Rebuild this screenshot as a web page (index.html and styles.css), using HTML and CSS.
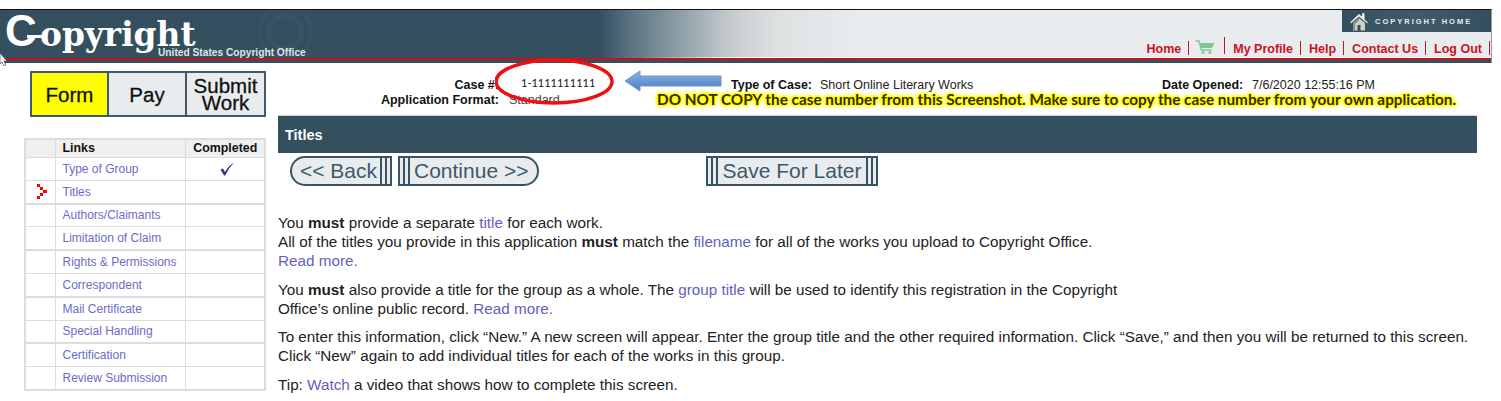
FILE: index.html
```html
<!DOCTYPE html>
<html lang="en">
<head>
<meta charset="utf-8">
<title>Copyright Titles</title>
<link rel="stylesheet" href="styles.css">
</head>
<body>
<div class="page">
  <header class="masthead">
    <div class="mast-main">
      <div class="logo">
        <div class="logo-word"><span class="logo-c">C</span><span class="logo-rest">opyright</span></div>
        <div class="logo-sub">United States Copyright Office</div>
      </div>
      <div class="mast-right">
        <div class="home-tab">
          <svg class="home-icon" width="18" height="19" viewBox="0 0 18 19"><path d="M0 10.500 9 2l3 2.800V1.500h1l.5-1 .5 1h.5v6L18 10.500l-1 .8L9 4.500 1 11.300z" fill="#f4f4f0"/><path d="M3 11l6-5 6 5v7.500h-4.500V13h-3v5.500H3z" fill="#cfcfc6"/><path d="M3 11l6-5v2.500L5 12v6.500H3z" fill="#8e8e84"/></svg>
          <span class="home-label">COPYRIGHT HOME</span>
        </div>
        <nav class="top-nav">
          <a>Home</a>
          <a class="cart"><svg width="20" height="14" viewBox="0 0 20 14"><path d="M.5 1h3.500l2.500 9h10" fill="none" stroke="#7fc795" stroke-width="1.500"/><path d="M4 3h15.500l-2.500 5H6z" fill="#7fc795"/><circle cx="8" cy="12.500" r="1.500" fill="#7fc795"/><circle cx="15" cy="12.500" r="1.500" fill="#7fc795"/></svg></a>
          <a>My Profile</a>
          <a>Help</a>
          <a>Contact Us</a>
          <a>Log Out</a>
        </nav>
      </div>
    </div>
  </header>

  <div class="main">
    <aside class="sidebar">
      <div class="steps">
        <div class="step step-on">Form</div>
        <div class="step">Pay</div>
        <div class="step step-two">Submit<br>Work</div>
      </div>
      <table class="links">
        <thead><tr><th></th><th class="col-link">Links</th><th class="col-done">Completed</th></tr></thead>
        <tbody>
          <tr><td></td><td class="col-link"><a>Type of Group</a></td><td class="done"><svg width="16" height="14" viewBox="0 0 16 14"><path d="M1.500 7.500 4 6.500l2 3.500C8 6 11 3 15 .8 11.500 4.500 8.500 8.500 6.300 13.500H5z" fill="#35358a"/></svg></td></tr>
          <tr><td class="cur"><svg width="12" height="18" viewBox="0 0 12 18"><g fill="#f00"><rect x="1" y="1" width="3" height="3"/><rect x="4" y="4" width="3" height="3"/><rect x="7" y="7" width="4" height="3"/><rect x="4" y="10" width="3" height="3"/><rect x="1" y="13" width="3" height="3"/></g></svg></td><td class="col-link"><a>Titles</a></td><td></td></tr>
          <tr><td></td><td class="col-link"><a>Authors/Claimants</a></td><td></td></tr>
          <tr><td></td><td class="col-link"><a>Limitation of Claim</a></td><td></td></tr>
          <tr><td></td><td class="col-link"><a>Rights &amp; Permissions</a></td><td></td></tr>
          <tr><td></td><td class="col-link"><a>Correspondent</a></td><td></td></tr>
          <tr><td></td><td class="col-link"><a>Mail Certificate</a></td><td></td></tr>
          <tr><td></td><td class="col-link"><a>Special Handling</a></td><td></td></tr>
          <tr><td></td><td class="col-link"><a>Certification</a></td><td></td></tr>
          <tr><td></td><td class="col-link"><a>Review Submission</a></td><td></td></tr>
        </tbody>
      </table>
    </aside>

    <section class="content">
      <div class="case-info">
        <div class="case-row">
          <b class="c-label">Case #:</b>
          <span class="c-num">1-1111111111</span>
          <b class="c-type">Type of Case:</b>
          <span class="c-typeval">Short Online Literary Works</span>
          <b class="c-date">Date Opened:</b>
          <span>7/6/2020 12:55:16 PM</span>
        </div>
        <div class="case-row">
          <b class="c-label">Application Format:</b>
          <span class="c-format">Standard</span>
          <span class="warning">DO NOT COPY the case number from this Screenshot. Make sure to copy the case number from your own application.</span>
        </div>
      </div>
      <h1 class="title-bar">Titles</h1>
      <div class="buttons">
        <span class="btn btn-back">&lt;&lt; Back</span>
        <span class="btn btn-cont">Continue &gt;&gt;</span>
        <span class="btn btn-save">Save For Later</span>
      </div>
      <div class="copy">
        <p>You <b>must</b> provide a separate <a>title</a> for each work.<br>
        All of the titles you provide in this application <b>must</b> match the <a>filename</a> for all of the works you upload to Copyright Office.<br>
        <a>Read more.</a></p>
        <p>You <b>must</b> also provide a title for the group as a whole. The <a>group title</a> will be used to identify this registration in the Copyright<br>
        Office’s online public record. <a>Read more.</a></p>
        <p>To enter this information, click “New.” A new screen will appear. Enter the group title and the other required information. Click “Save,” and then you will be returned to this screen.<br>
        Click “New” again to add individual titles for each of the works in this group.</p>
        <p>Tip: <a>Watch</a> a video that shows how to complete this screen.</p>
      </div>
    </section>
  </div>

  <svg class="annot" width="260" height="50" viewBox="0 0 260 50">
    <defs><linearGradient id="ag" x1="0" y1="0" x2="0" y2="1"><stop offset="0" stop-color="#8db3e6"/><stop offset="1" stop-color="#4a7cc4"/></linearGradient></defs>
    <ellipse cx="59" cy="23.500" rx="58" ry="21.500" fill="none" stroke="#ee0f0f" stroke-width="3.500"/>
    <path d="M130 23l15-10v5h81v10h-81v5z" fill="url(#ag)" stroke="#6d94c9"/>
  </svg>
  <svg class="cursor" width="8" height="14" viewBox="0 0 8 14"><path d="M0 1 7 9H4l2 4-2 1-2-4-2 2z" fill="#fff" stroke="#333" stroke-width=".6"/></svg>
</div>
</body>
</html>
```
FILE: styles.css
```css
html, body { margin: 0; padding: 0; background: #fff; }
body { font-family: "Liberation Sans", Arial, sans-serif; color: #222; overflow: hidden; }
.page { width: 1501px; height: 401px; position: relative; overflow: hidden; padding-top: 9px; box-sizing: border-box; }

.masthead { width: 1492px; height: 54px; box-sizing: border-box; border-top: 1px solid #111; border-right: 1px solid #999; background: #34505f; padding-bottom: 3px; }
.mast-main { height: 50px; box-sizing: border-box; border-bottom: 2px solid #c4121f; display: flex; justify-content: space-between;
  background-color: #34505f;
  background-image:
    linear-gradient(90deg, transparent 640px, #fff 760px),
    radial-gradient(circle at 285px 22px, transparent 0 14px, rgba(255,255,255,.025) 15px 18px, transparent 19px 24px, rgba(255,255,255,.02) 25px 27px, transparent 28px),
    linear-gradient(90deg, #34505f 0, #34505f 600px, #5a7380 630px, #95a5ad 687px, #c5cbce 730px, #dfe2e3 780px, #e8ecee 860px);
  background-size: 100% 1px, 100% 100%, 100% 100%;
  background-position: 0 100%, 0 0, 0 0;
  background-repeat: no-repeat;
}

.logo { width: 320px; padding-left: 5px; color: #fff; box-sizing: border-box; }
.logo-word { display: flex; align-items: baseline; font-weight: bold; height: 37px; line-height: 42px; position: relative; }
.logo-c { font-family: "Liberation Sans", sans-serif; font-size: 44px; width: 35px; }
.logo-c::after { content: ""; position: absolute; left: 22px; top: 25px; width: 16px; height: 3px; background: #fff; }
.logo-rest { font-family: "DejaVu Serif", serif; font-size: 32.800px; letter-spacing: 0; line-height: 36px; }
.logo-sub { font-size: 10.200px; font-weight: bold; margin: 0 0 0 153px; color: #dfe5e8; line-height: 11px; white-space: nowrap; }

.mast-right { display: flex; flex-direction: column; align-items: flex-end; }
.home-tab { width: 149px; height: 22px; flex: none; box-sizing: border-box; background: linear-gradient(90deg, #34505f, #3f5a69 50%, #34505f); display: flex; align-items: center; padding-left: 8px; gap: 7px; }
.home-label { font-size: 7.500px; font-weight: bold; letter-spacing: 2px; color: #e8ecee; white-space: nowrap; }
.top-nav { display: flex; align-items: flex-end; height: 26px; flex: none; padding: 0 1px 3px 0; box-sizing: border-box; }
.top-nav a { font-size: 12.500px; font-weight: bold; color: #cc1122; padding: 0 7px 0 8px; border-right: 1.500px solid #c4121f; line-height: 16px; height: 14px; }
.top-nav .cart { height: 17px; display: flex; align-items: flex-end; padding: 0 9px 0 6px; margin-bottom: 1px; }

.main { display: grid; grid-template-columns: 278px 1199px; }

.steps { margin: 8px 0 0 30px; width: 236px; height: 46px; box-sizing: border-box; background: #3f5a6a; padding: 2px; display: grid; grid-template-columns: 75px 76px 1fr; gap: 2px; }
.step { background: #e8ecee; color: #111; font-size: 20.500px; -webkit-text-stroke: .3px #111; padding-top: 1px; display: flex; align-items: center; justify-content: center; text-align: center; }
.step-on { background: #ff0; }
.step-two { line-height: 17px; padding-top: 0; }

.links { margin: 21px 0 0 24px; width: 242px; border-collapse: collapse; table-layout: fixed; border: 2px solid #dcdcdc; font-size: 12px; }
.links th, .links td { border: 1px solid #dcdcdc; padding: 0; height: 23.300px; box-sizing: border-box; }
.links th:nth-child(1), .links td:nth-child(1) { width: 30px; }
.links th:nth-child(3), .links td:nth-child(3) { width: 80px; }
.links th { background: #efefef; height: 18px; color: #111; font-size: 12.400px; }
.links .col-done { padding-left: 1px; }
.links tbody tr:nth-child(even) td { border-bottom-width: 2px; }
.links .col-link { text-align: left; padding-left: 7px; white-space: nowrap; }
.links a { color: #6b6bc9; }
.links .done { text-align: center; padding-left: 4px; }
.done svg, .cur svg { display: block; margin: 0 auto; }
.cur svg { margin-left: 10px; }

.case-info { height: 52px; padding-top: 15px; box-sizing: border-box; font-size: 12.500px; }
.case-row { display: flex; height: 15px; line-height: 15px; white-space: nowrap; }
.c-label { width: 221px; text-align: right; flex: none; color: #111; }
.c-num { margin: -3px 0 0 22px; width: 210px; font-family: Lato, sans-serif; font-size: 11px; color: #111; flex: none; }
.c-type { width: 89px; flex: none; color: #111; }
.c-typeval { width: 342px; flex: none; }
.c-date { width: 90px; flex: none; color: #111; }
.c-format { margin-left: 10px; width: 148px; flex: none; color: #444; }
.warning { font-family: Lato, sans-serif; font-weight: bold; font-size: 15.300px; color: #3a2a00; margin-top: -1px; text-shadow: 0 0 1px #ff0, 0 0 2px #ff0, 0 0 2px #ff0, 0 0 3px #ff0, 0 0 3px #ff0, 0 0 3px #ff0, 0 0 4px #ff0, 0 0 4px #ff0, 0 0 4px #ff0; }

.title-bar { margin: 0; height: 38px; line-height: 38px; background: #34505f; border-top: 1px solid #cfd6da; box-sizing: border-box; color: #fff; font-size: 14.500px; font-weight: bold; padding-left: 7px; }

.buttons { display: flex; margin: 3px 0 0 12px; height: 30px; }
.btn { display: flex; align-items: center; box-sizing: border-box; height: 30px; background: #e8ecee; border: 2px solid #3a5363; color: #3f5868; font-size: 21px; white-space: nowrap; }
.btn::before, .btn::after { align-self: stretch; box-sizing: border-box; width: 7px; border-left: 2px solid #3a5363; border-right: 2px solid #3a5363; flex: none; }
.btn-back { width: 102px; border-radius: 15px 0 0 15px; padding-left: 8px; justify-content: space-between; padding-right: 3px; }
.btn-back::after { content: ""; }
.btn-cont { width: 141px; margin-left: 6px; border-radius: 0 15px 15px 0; padding-left: 3px; gap: 4px; }
.btn-cont::before { content: ""; }
.btn-save { width: 172px; margin-left: 167px; padding: 0 3px; justify-content: space-between; }
.btn-save::before, .btn-save::after { content: ""; }

.copy { margin-top: 27px; font-size: 15.250px; line-height: 19px; color: #222; }
.copy p { margin: 0 0 9.500px; white-space: nowrap; }
.copy a { color: #5f5fc4; }

.annot { position: absolute; left: 495px; top: 58px; }
.cursor { position: absolute; left: 0; top: 52px; }
```
